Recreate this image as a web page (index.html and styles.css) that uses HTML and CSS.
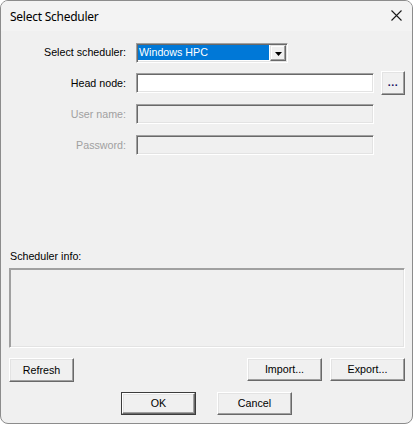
FILE: index.html
```html
<!DOCTYPE html>
<html>
<head>
<meta charset="utf-8">
<title>Select Scheduler</title>
<link rel="stylesheet" href="styles.css">
</head>
<body>
<div class="window">
  <div class="titlebar">
    <span class="title">Select Scheduler</span>
    <svg class="close" width="11" height="11" viewBox="0 0 11 11"><path d="M0.5 0.5 L10.5 10.5 M10.5 0.5 L0.5 10.5" stroke="#1a1a1a" stroke-width="1.1" fill="none"/></svg>
  </div>
  <div class="content">
    <div class="form">
      <label class="lbl">Select scheduler:</label>
      <div class="combo">
        <div class="combo-sel">Windows HPC</div>
        <div class="combo-btn"><svg width="7" height="4" viewBox="0 0 7 4"><path d="M0 0 H7 L3.5 4 Z" fill="#000"/></svg></div>
      </div>
      <label class="lbl">Head node:</label>
      <div class="cell-row">
        <div class="input"></div>
        <div class="btn btn-dots">...</div>
      </div>
      <label class="lbl disabled">User name:</label>
      <div class="input"></div>
      <label class="lbl disabled">Password:</label>
      <div class="input"></div>
    </div>
    <div class="spacer"></div>
    <div class="info-label">Scheduler info:</div>
    <div class="info-box"></div>
    <div class="btn-row">
      <div class="btn btn-refresh">Refresh</div>
      <div class="grow"></div>
      <div class="btn btn-std">Import...</div>
      <div class="btn btn-std">Export...</div>
    </div>
    <div class="ok-row">
      <div class="default-frame"><div class="btn btn-ok">OK</div></div>
      <div class="btn btn-std btn-cancel">Cancel</div>
    </div>
  </div>
</div>
</body>
</html>
```

FILE: styles.css
```css
html, body {
  margin: 0;
  padding: 0;
  background: #ffffff;
}
.window {
  width: 413px;
  height: 424px;
  box-sizing: border-box;
  border: 1px solid #8c8c8c;
  border-radius: 8px;
  background: #f0f0f0;
  display: flex;
  flex-direction: column;
  overflow: hidden;
  font-family: "Liberation Sans", Arial, sans-serif;
  font-size: 10.7px;
  color: #000;
}
.titlebar {
  height: 30px;
  flex: none;
  background: #f3f3f3;
  display: flex;
  align-items: center;
  justify-content: space-between;
  padding: 0 10px 0 9px;
}
.title {
  font-family: "Noto Sans", "Open Sans", sans-serif;
  font-size: 12px;
  color: #000;
  letter-spacing: -0.25px;
}
.close {
  display: block;
  margin-top: -1px;
}
.content {
  flex: 1;
  display: flex;
  flex-direction: column;
  padding: 11px 7px 8px 8px;
}
.form {
  display: grid;
  grid-template-columns: 117px auto;
  grid-auto-rows: 20px;
  column-gap: 10px;
  row-gap: 11px;
  justify-content: start;
}
.lbl {
  text-align: right;
  align-self: center;
  line-height: 13px;
  white-space: nowrap;
}
.lbl.disabled {
  color: #a0a0a0;
}
.input {
  width: 238px;
  height: 20px;
  box-sizing: border-box;
  border: 1px solid;
  border-color: #a0a0a0 #ffffff #ffffff #a0a0a0;
  box-shadow: inset 1px 1px #696969, inset -1px -1px #e3e3e3;
  background: #f0f0f0;
}
.cell-row .input {
  background: #ffffff;
}
.cell-row {
  display: flex;
  align-items: center;
  gap: 7px;
}
.combo {
  width: 152px;
  height: 20px;
  box-sizing: border-box;
  border: 1px solid;
  border-color: #a0a0a0 #ffffff #ffffff #a0a0a0;
  box-shadow: inset 1px 1px #696969, inset -1px -1px #e3e3e3;
  background: #ffffff;
  display: flex;
  padding: 2px;
  align-items: stretch;
  margin-top: 1px;
}
.combo-sel {
  flex: 1;
  background: #0078d7;
  color: #ffffff;
  line-height: 14px;
  padding-left: 1px;
  margin: -1px 1px 0 -1px;
}
.combo-btn {
  width: 16px;
  margin: -1px -1px -1px 0;
  box-sizing: border-box;
  border: 1px solid;
  border-color: #e3e3e3 #696969 #696969 #e3e3e3;
  box-shadow: inset -1px -1px #a0a0a0, inset 1px 1px #ffffff;
  background: #f0f0f0;
  display: flex;
  align-items: center;
  justify-content: center;
}
.combo-btn svg {
  display: block;
  margin-top: 1px;
}
.btn {
  box-sizing: border-box;
  height: 23px;
  border: 1px solid;
  border-color: #ffffff #696969 #696969 #ffffff;
  box-shadow: inset -1px -1px #a0a0a0, inset 1px 1px #e3e3e3;
  background: #f0f0f0;
  display: flex;
  align-items: center;
  justify-content: center;
  line-height: 13px;
  white-space: nowrap;
}
.btn-dots {
  width: 24px;
  height: 24px;
  padding-bottom: 2px;
  color: #1a1060;
  font-weight: bold;
  letter-spacing: 0.5px;
}
.spacer {
  flex: 1;
}
.info-label {
  line-height: 13px;
  margin-bottom: 5px;
  padding-left: 1px;
}
.info-box {
  height: 80px;
  box-sizing: border-box;
  border: 1px solid;
  border-color: #a0a0a0 #ffffff #ffffff #a0a0a0;
  box-shadow: inset 1px 1px #a0a0a0, inset -1px -1px #e3e3e3;
}
.btn-row {
  display: flex;
  margin-top: 10px;
  gap: 8px;
}
.grow {
  flex: 1;
}
.btn-refresh {
  width: 65px;
  height: 24px;
}
.btn-std {
  width: 75px;
}
.ok-row {
  display: flex;
  justify-content: center;
  gap: 21px;
  margin-top: 10px;
  margin-right: 1px;
}
.default-frame {
  width: 75px;
  height: 23px;
  box-sizing: border-box;
  border: 1px solid #3c3c3c;
}
.btn-ok {
  width: 100%;
  height: 100%;
}
```
